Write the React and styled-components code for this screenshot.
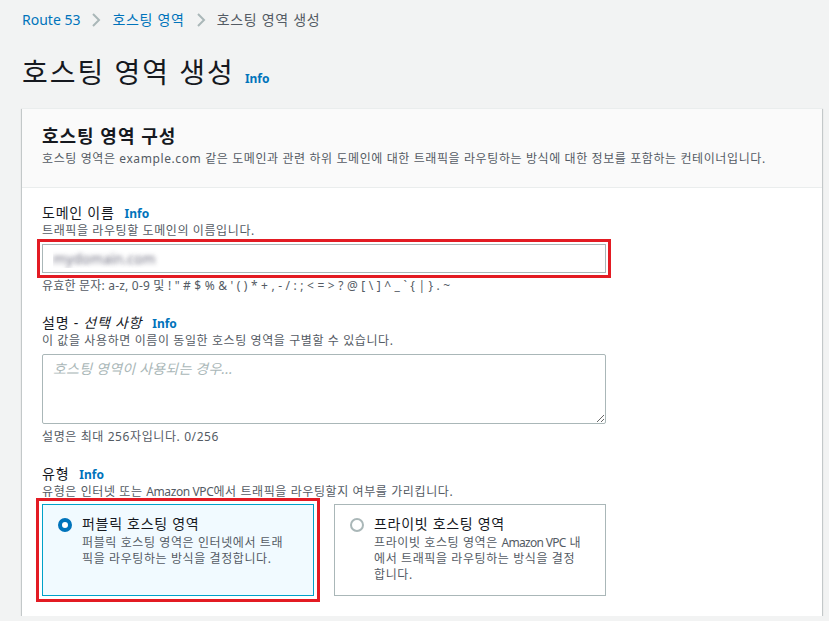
import React from "react";
import styled, { createGlobalStyle } from "styled-components";

const GlobalStyle = createGlobalStyle`
  body {
    margin: 0;
    background: #f2f3f3;
    font-family: "Noto Sans", "Noto Sans CJK KR", sans-serif;
    color: #16191f;
    letter-spacing: 0.05em;
  }
`;

const Page = styled.div`
  padding: 10px 7px 0 22px;
`;

const Breadcrumbs = styled.div`
  display: flex;
  align-items: center;
  font-size: 14px;
  line-height: 20px;
  letter-spacing: 0.7px;
`;

const Crumb = styled.span`
  color: ${(p) => (p.$current ? "#545b64" : "#0073bb")};
  letter-spacing: ${(p) => (p.$latin ? "normal" : "inherit")};
`;

const Chevron = styled.svg`
  width: 16px;
  height: 16px;
  margin: 0 8px;
  color: #aab7b8;
`;

const TitleRow = styled.div`
  display: flex;
  align-items: baseline;
  gap: 10px;
  margin-top: 24px;
`;

const PageTitle = styled.h1`
  margin: 0;
  font-size: 28px;
  line-height: 36px;
  font-weight: 400;
  letter-spacing: 2px;
`;

const InfoLink = styled.a`
  color: #0073bb;
  font-size: 12px;
  font-weight: 700;
  letter-spacing: normal;
  text-decoration: none;
  margin-left: ${(p) => p.$gap || "0"};
`;

const En = styled.span`
  letter-spacing: -0.4px;
`;

const Panel = styled.section`
  width: 800px;
  margin-top: 18px;
  background: #fff;
  box-shadow: 0 1px 1px 0 rgba(0, 28, 36, 0.3),
    1px 1px 1px 0 rgba(0, 28, 36, 0.15), -1px 1px 1px 0 rgba(0, 28, 36, 0.15);
  border-top: 1px solid #eaeded;
`;

const PanelHeader = styled.div`
  background: #fafafa;
  border-bottom: 1px solid #eaeded;
  padding: 16px 20px 20px;
`;

const PanelTitle = styled.h2`
  margin: 0;
  font-size: 18px;
  line-height: 22px;
  font-weight: 700;
  letter-spacing: 1px;
`;

const PanelDesc = styled.p`
  margin: 4px 0 0;
  font-size: 12px;
  line-height: 16px;
  color: #545b64;
  letter-spacing: 0.6px;
`;

const PanelBody = styled.div`
  padding: 16px 20px 20px;
  display: flex;
  flex-direction: column;
  gap: 20px;
`;

const Field = styled.div`
  width: 564px;
`;

const Label = styled.div`
  font-size: 14px;
  line-height: 18px;
  letter-spacing: 0.75px;
  display: flex;
  align-items: baseline;

  em {
    font-style: italic;
  }
`;

const Hint = styled.div`
  font-size: 12px;
  line-height: 16px;
  color: #545b64;
  letter-spacing: ${(p) => (p.$tight ? "0.2px" : "0.6px")};
`;

const TextInput = styled.input`
  box-sizing: border-box;
  display: block;
  width: 100%;
  height: 29px;
  margin: 5px 0 5px;
  padding: 4px 10px;
  border: 1px solid #aab7b8;
  border-radius: 0;
  font-family: inherit;
  font-size: 14px;
  letter-spacing: normal;
  color: transparent;
  text-shadow: 0 0 4px rgba(90, 90, 110, 0.85);
  outline: 3px solid #e31b23;
  outline-offset: 2px;
`;

const TextArea = styled.textarea`
  box-sizing: border-box;
  display: block;
  width: 100%;
  height: 70px;
  margin: 5px 0 5px;
  padding: 4px 10px;
  border: 1px solid #aab7b8;
  border-radius: 2px;
  font-family: inherit;
  font-size: 14px;
  line-height: 20px;
  letter-spacing: 0.2px;

  &::placeholder {
    color: #aab7b8;
    font-style: italic;
  }
`;

const TileGrid = styled.div`
  display: grid;
  grid-template-columns: 1fr 1fr;
  gap: 20px;
  margin-top: 4px;
`;

const Tile = styled.label`
  display: flex;
  gap: 10px;
  padding: 10px 22px 12px 15px;
  border: 1px solid ${(p) => (p.$selected ? "#00a1c9" : "#aab7b8")};
  background: ${(p) => (p.$selected ? "#f1faff" : "#fff")};
  outline: ${(p) => (p.$selected ? "3px solid #e31b23" : "none")};
  outline-offset: 3px;
`;

const Radio = styled.span`
  box-sizing: border-box;
  flex: none;
  width: 14px;
  height: 14px;
  margin-top: 3px;
  border-radius: 50%;
  background: #fff;
  border: ${(p) => (p.$checked ? "4px solid #0073bb" : "2px solid #aab7b8")};
`;

const TileTitle = styled.div`
  font-size: 14px;
  line-height: 18px;
  letter-spacing: 0.7px;
`;

const TileDesc = styled.div`
  margin-top: 2px;
  font-size: 12px;
  line-height: 16px;
  color: #545b64;
  letter-spacing: 0.6px;

  ${En} {
    letter-spacing: -0.7px;
  }
`;

function ChevronIcon() {
  return (
    <Chevron viewBox="0 0 16 16" fill="none">
      <path d="M5 2l6 6-6 6" stroke="currentColor" strokeWidth="2" />
    </Chevron>
  );
}

const validChars =
  "유효한 문자: a-z, 0-9 및 ! \" # $ % & ' ( ) * + , - / : ; < = > ? @ [ \\ ] ^ _ ` { | } . ~";

export default function App() {
  return (
    <Page>
      <GlobalStyle />
      <Breadcrumbs>
        <Crumb $latin>Route 53</Crumb>
        <ChevronIcon />
        <Crumb>호스팅 영역</Crumb>
        <ChevronIcon />
        <Crumb $current>호스팅 영역 생성</Crumb>
      </Breadcrumbs>

      <TitleRow>
        <PageTitle>호스팅 영역 생성</PageTitle>
        <InfoLink>Info</InfoLink>
      </TitleRow>

      <Panel>
        <PanelHeader>
          <PanelTitle>호스팅 영역 구성</PanelTitle>
          <PanelDesc>
            호스팅 영역은 example.com 같은 도메인과 관련 하위 도메인에 대한
            트래픽을 라우팅하는 방식에 대한 정보를 포함하는 컨테이너입니다.
          </PanelDesc>
        </PanelHeader>

        <PanelBody>
          <Field>
            <Label>
              도메인 이름<InfoLink $gap="10px">Info</InfoLink>
            </Label>
            <Hint>트래픽을 라우팅할 도메인의 이름입니다.</Hint>
            <TextInput defaultValue="mydomain.com" readOnly />
            <Hint $tight>{validChars}</Hint>
          </Field>

          <Field>
            <Label>
              설명 -&nbsp;<em>선택 사항</em>
              <InfoLink $gap="10px">Info</InfoLink>
            </Label>
            <Hint>이 값을 사용하면 이름이 동일한 호스팅 영역을 구별할 수 있습니다.</Hint>
            <TextArea placeholder="호스팅 영역이 사용되는 경우..." />
            <Hint>설명은 최대 256자입니다. 0/256</Hint>
          </Field>

          <Field>
            <Label>
              유형<InfoLink $gap="10px">Info</InfoLink>
            </Label>
            <Hint>
              유형은 인터넷 또는 <En>Amazon VPC</En>에서 트래픽을 라우팅할지 여부를
              가리킵니다.
            </Hint>
            <TileGrid>
              <Tile $selected>
                <Radio $checked />
                <div>
                  <TileTitle>퍼블릭 호스팅 영역</TileTitle>
                  <TileDesc>
                    퍼블릭 호스팅 영역은 인터넷에서 트래픽을 라우팅하는 방식을
                    결정합니다.
                  </TileDesc>
                </div>
              </Tile>
              <Tile>
                <Radio />
                <div>
                  <TileTitle>프라이빗 호스팅 영역</TileTitle>
                  <TileDesc>
                    프라이빗 호스팅 영역은 <En>Amazon VPC</En> 내에서 트래픽을
                    라우팅하는 방식을 결정합니다.
                  </TileDesc>
                </div>
              </Tile>
            </TileGrid>
          </Field>
        </PanelBody>
      </Panel>
    </Page>
  );
}
